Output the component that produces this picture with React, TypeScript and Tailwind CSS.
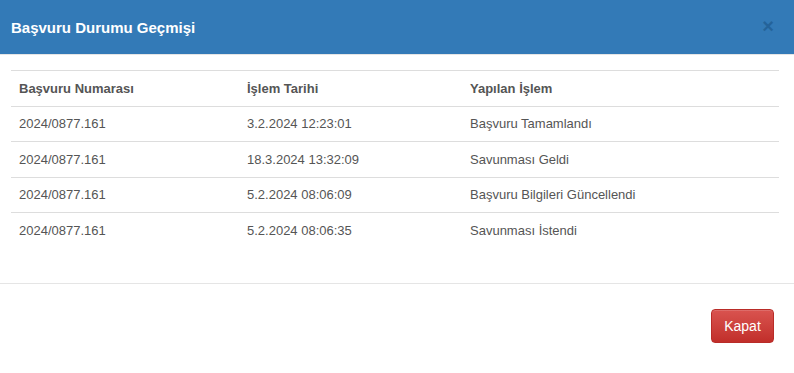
import React from 'react';

const rows = [
  { no: '2024/0877.161', date: '3.2.2024 12:23:01', action: 'Başvuru Tamamlandı' },
  { no: '2024/0877.161', date: '18.3.2024 13:32:09', action: 'Savunması Geldi' },
  { no: '2024/0877.161', date: '5.2.2024 08:06:09', action: 'Başvuru Bilgileri Güncellendi' },
  { no: '2024/0877.161', date: '5.2.2024 08:06:35', action: 'Savunması İstendi' },
];

export default function App() {
  return (
    <div className="w-[794px] h-[373px] bg-white flex flex-col text-[13px] text-[#555] font-['Liberation_Sans',Arial,sans-serif]">
      {/* Header */}
      <div className="h-[55px] bg-[#337ab7] border-b border-[#e5e5e5] flex items-center justify-between pl-[11px] pr-[20px] shrink-0">
        <h4 className="text-white font-bold text-[15px] leading-none">Başvuru Durumu Geçmişi</h4>
        <button className="text-[#1f5a8f] opacity-70 text-[20px] font-bold leading-none -mt-[3px]">×</button>
      </div>

      {/* Body */}
      <div className="pt-[15px] px-[11px] h-[228px] shrink-0">
        <table className="w-[768px] border-collapse">
          <thead>
            <tr className="border-t border-[#ddd] border-b border-b-[#ddd]">
              <th className="w-[228px] h-[36px] text-left font-bold px-[8px] align-middle">Başvuru Numarası</th>
              <th className="w-[223px] text-left font-bold px-[8px] align-middle">İşlem Tarihi</th>
              <th className="text-left font-bold px-[8px] align-middle">Yapılan İşlem</th>
            </tr>
          </thead>
          <tbody>
            {rows.map((r, i) => (
              <tr key={i} className={i > 0 ? 'border-t border-[#ddd]' : ''}>
                <td className={`${i === 1 ? 'h-[36px]' : 'h-[35px]'} px-[8px] align-middle`}>{r.no}</td>
                <td className="px-[8px] align-middle">{r.date}</td>
                <td className="px-[8px] align-middle">{r.action}</td>
              </tr>
            ))}
          </tbody>
        </table>
      </div>

      {/* Footer */}
      <div className="border-t border-[#e5e5e5] flex justify-end pt-[25px] pr-[20px]">
        <button className="w-[63px] h-[34px] rounded-[4px] border border-[#b92c28] bg-gradient-to-b from-[#d9534f] to-[#c12e2a] text-white text-[14px] shadow-[inset_0_1px_0_rgba(255,255,255,0.15)]">
          Kapat
        </button>
      </div>
    </div>
  );
}
